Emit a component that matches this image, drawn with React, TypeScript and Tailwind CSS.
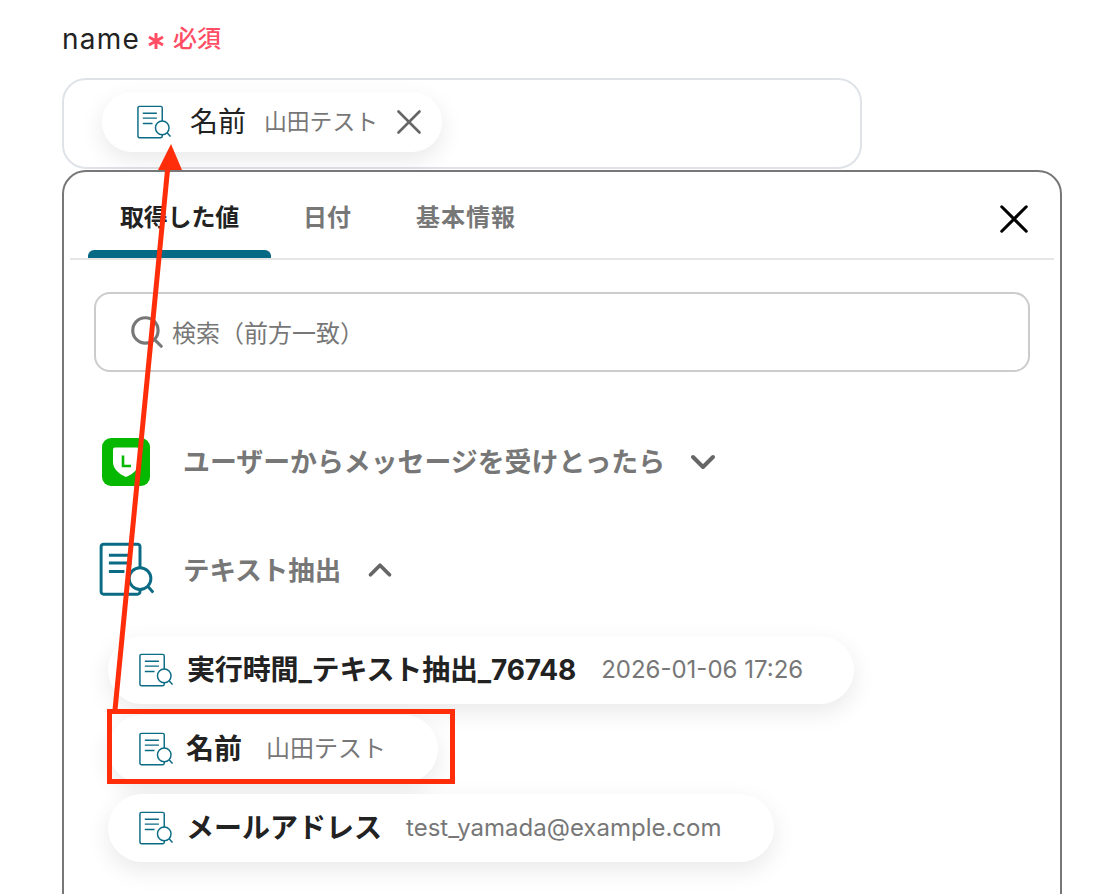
import React from 'react';
import { ChevronDown, ChevronUp, Search } from 'lucide-react';

const JP = "font-['Inter','Noto_Sans_CJK_JP',sans-serif]";

function DocIcon({ className, stroke = 1.5 }: { className: string; stroke?: number }) {
  return (
    <svg viewBox="0 0 36 36" fill="none" stroke="#0b6b84" strokeWidth={stroke} className={className}>
      <path d="M27 17V3a1.600 1.600 0 0 0-1.600-1.600H3.600A1.600 1.600 0 0 0 2 3v29a1.600 1.600 0 0 0 1.600 1.600h21.800a1.600 1.600 0 0 0 1.600-1.600v-2" />
      <path d="M7 8.500h14.500M7 13.500h14.500M7 19h10" />
      <circle cx="27" cy="23.500" r="7" fill="#fff" />
      <path d="M32 28.500l3.500 4" />
    </svg>
  );
}

function LineIcon() {
  return (
    <svg viewBox="0 0 48 48" className="w-12 h-12 shrink-0">
      <rect width="48" height="48" rx="9" fill="#06b900" />
      <path d="M13 9.500h22a2 2 0 0 1 2 2V24c0 7-6 12-13 15-7-3-13-8-13-15V11.500a2 2 0 0 1 2-2z" fill="#fff" />
      <path d="M21 17.500V28h8" fill="none" stroke="#06b900" strokeWidth="2.600" />
    </svg>
  );
}

function CloseIcon({ className, color, stroke }: { className: string; color: string; stroke: number }) {
  return (
    <svg viewBox="0 0 24 24" fill="none" stroke={color} strokeWidth={stroke} strokeLinecap="round" className={className}>
      <path d="M1.500 1.500l21 21M22.500 1.500l-21 21" />
    </svg>
  );
}

function ValuePill({ name, value, width, nameClass, valueClass }: { name: string; value: string; width: string; nameClass: string; valueClass: string }) {
  return (
    <div className={`${width} h-[68px] flex items-center rounded-full bg-white shadow-[0_8px_24px_rgba(0,0,0,0.09)] pl-[30px]`}>
      <DocIcon className="w-[35px] h-[35px] shrink-0" />
      <span className={`text-[28px] font-bold text-[#222] whitespace-nowrap ${nameClass}`}>{name}</span>
      <span className={`text-[24px] text-[#777] whitespace-nowrap ${valueClass}`}>{value}</span>
    </div>
  );
}

export default function App() {
  return (
    <div className={`relative h-[894px] overflow-hidden bg-white pl-[62px] pt-[20px] ${JP}`}>
      {/* Label */}
      <div className="flex items-center h-[38px] mb-[20px]">
        <span className="text-[28px] tracking-[1.2px] text-[#222]">name</span>
        <svg viewBox="0 0 16 16" fill="none" stroke="#ff4d63" strokeWidth="3" className="ml-[8px] w-[16px] h-[16px] mt-[3px]">
          <path d="M8 0v16M1 4l14 8M15 4L1 12" />
        </svg>
        <span className="ml-[9px] text-[24px] font-medium text-[#ff4d63]">必須</span>
      </div>

      {/* Input with selected value */}
      <div className="w-[800px] h-[91px] rounded-[24px] border-2 border-[#dfe3e8] bg-white pl-[38px] pt-[12px]">
        <div className="w-[340px] h-[60px] flex items-center rounded-full bg-white shadow-[0_8px_24px_rgba(0,0,0,0.09)] pl-[34px]">
          <DocIcon className="w-[35px] h-[35px] shrink-0" />
          <span className="ml-[19px] text-[28px] text-[#222] whitespace-nowrap">名前</span>
          <span className="ml-[18px] text-[22.8px] text-[#777] whitespace-nowrap">山田テスト</span>
          <CloseIcon className="ml-[19px] w-[24px] h-[24px]" color="#666" stroke={2.600} />
        </div>
      </div>

      {/* Dropdown panel */}
      <div className="mt-px w-[1000px] h-[760px] rounded-[24px] border-2 border-[#777] bg-white">
        <div className="mx-[6px] h-[88px] flex justify-between border-b-2 border-[#e6e6e6]">
          <div className="flex pl-[18px]">
            <div className="relative px-[32px] pt-[29px] text-[24px] leading-[34px] font-semibold tracking-[-0.2px] text-[#222]">
              取得した値
              <div className="absolute left-0 right-0 bottom-0 h-[8px] rounded-t-[6px] bg-[#066a85]" />
            </div>
            <div className="px-[32px] pt-[29px] text-[24px] leading-[34px] font-semibold text-[#777]">日付</div>
            <div className="pl-[33px] pt-[29px] text-[24px] leading-[34px] font-semibold tracking-[1px] text-[#777]">基本情報</div>
          </div>
          <CloseIcon className="mt-[33px] mr-[26px] w-[28px] h-[28px]" color="#000" stroke={2.600} />
        </div>

        <div className="pl-[30px] pt-[32px]">
          <div className="w-[936px] h-[80px] flex items-center rounded-[16px] border-2 border-[#ccc] pl-[32px]">
            <Search className="w-[38px] h-[38px] text-[#777] shrink-0" strokeWidth={2} />
            <span className="ml-[6px] pt-[3px] text-[24px] text-[#777]">検索（前方一致）</span>
          </div>
        </div>

        <div className="pl-[38px] pt-[66px] flex items-center">
          <LineIcon />
          <span className="ml-[33px] text-[26.9px] font-semibold text-[#777] whitespace-nowrap">ユーザーからメッセージを受けとったら</span>
          <ChevronDown className="ml-[18px] w-[40px] h-[40px] text-[#666]" strokeWidth={2.400} />
        </div>

        <div className="pl-[34px] pt-[56px] flex items-center">
          <DocIcon className="w-[56px] h-[56px] shrink-0" stroke={1.900} />
          <span className="ml-[29px] pt-[2px] text-[26.5px] font-semibold text-[#777] whitespace-nowrap">テキスト抽出</span>
          <ChevronUp className="ml-[20px] w-[38px] h-[38px] text-[#666]" strokeWidth={2.400} />
        </div>

        <div className="pl-[44px] pt-[38px] flex flex-col gap-[11px]">
          <ValuePill name="実行時間_テキスト抽出_76748" value="2026-01-06 17:26" width="w-[746px]" nameClass="ml-[14px] tracking-[-0.15px]" valueClass="ml-[25px]" />
          <ValuePill name="名前" value="山田テスト" width="w-[330px]" nameClass="ml-[13px]" valueClass="ml-[24px]" />
          <ValuePill name="メールアドレス" value="test_yamada@example.com" width="w-[666px]" nameClass="ml-[13px]" valueClass="ml-[24px]" />
        </div>
      </div>

      {/* Red annotation drawn over the screen */}
      <svg className="absolute inset-0 pointer-events-none" width="1106" height="894" viewBox="0 0 1106 894" fill="none">
        <path d="M115 710L168 165" stroke="#ff2d0a" strokeWidth="5" />
        <path d="M171 144L158 170H182Z" fill="#ff2d0a" />
      </svg>
      <div className="absolute left-[107px] top-[709px] w-[348px] h-[75px] border-[5px] border-[#ff2d0a]" />
    </div>
  );
}
